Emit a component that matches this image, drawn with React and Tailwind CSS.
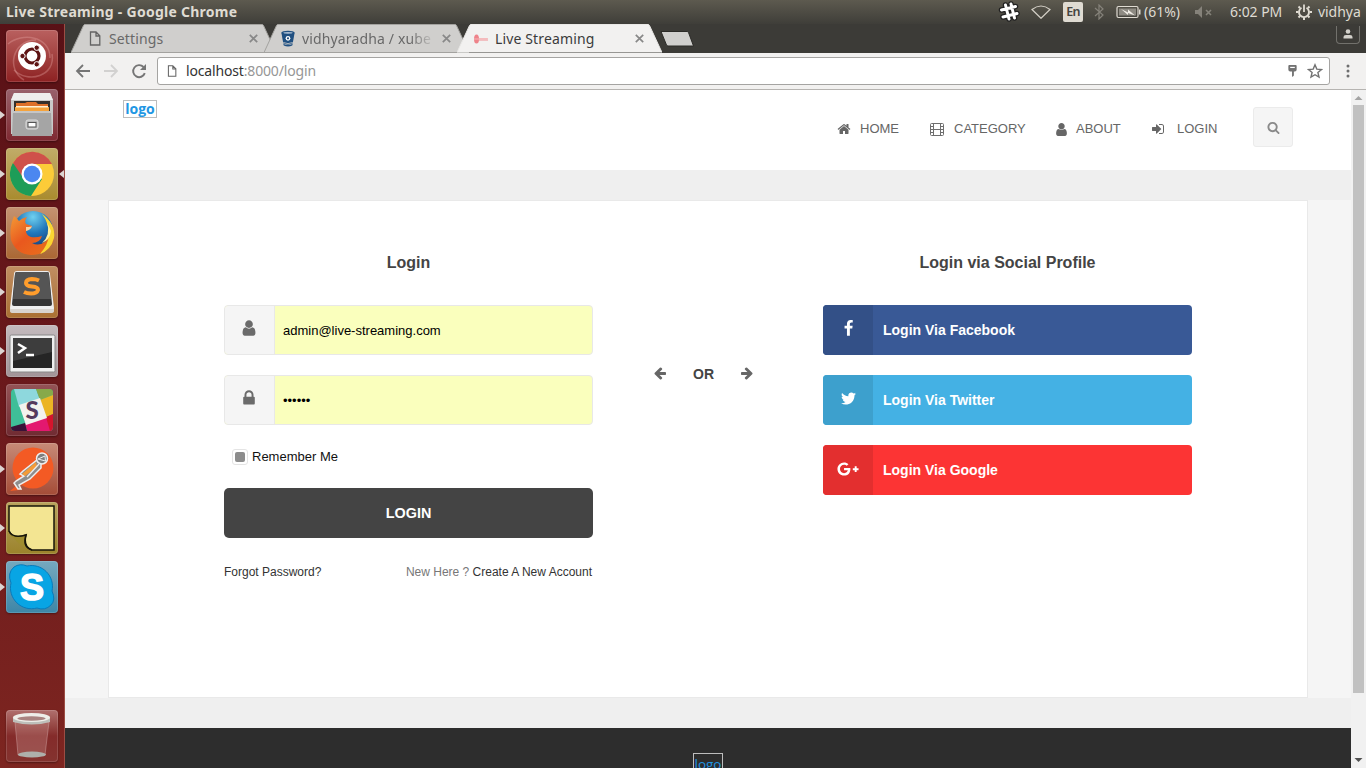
import React from "react";
import { FaGooglePlusG } from "react-icons/fa";

const PATHS = {
  home: "M1472 992v480q0 26-19 45t-45 19h-384v-384h-256v384h-384q-26 0-45-19t-19-45v-480q0-1 .5-3t.5-3l575-474 575 474q1 2 1 6zm223-69l-62 74q-8 9-21 11h-3q-13 0-21-7l-692-577-692 577q-12 8-24 7-13-2-21-11l-62-74q-8-10-7-23.5t11-21.5l719-599q32-26 76-26t76 26l244 204v-195q0-14 9-23t23-9h192q14 0 23 9t9 23v408l219 182q10 8 11 21.5t-7 23.5z",
  user: "M1536 1399q0 109-62.5 187t-150.5 78h-854q-88 0-150.5-78t-62.5-187q0-85 8.5-160.5t31.5-152 58.5-131 94-89 134.5-34.5q131 128 313 128t313-128q76 0 134.5 34.5t94 89 58.5 131 31.5 152 8.5 160.5zm-256-887q0 159-112.5 271.5t-271.5 112.5-271.5-112.5-112.5-271.5 112.5-271.5 271.5-112.5 271.5 112.5 112.5 271.5z",
  lock: "M640 768h512v-192q0-106-75-181t-181-75-181 75-75 181v192zm832 96v576q0 40-28 68t-68 28h-960q-40 0-68-28t-28-68v-576q0-40 28-68t68-28h32v-192q0-184 132-316t316-132 316 132 132 316v192h32q40 0 68 28t28 68z",
  search: "M1216 832q0-185-131.5-316.5t-316.5-131.5-316.5 131.5-131.5 316.5 131.5 316.5 316.5 131.5 316.5-131.5 131.5-316.5zm512 832q0 52-38 90t-90 38q-54 0-90-38l-343-342q-179 124-399 124-143 0-273.5-55.5t-225-150-150-225-55.5-273.5 55.5-273.5 150-225 225-150 273.5-55.5 273.5 55.5 225 150 150 225 55.5 273.5q0 220-124 399l343 343q37 37 37 90z",
  signIn: "M1312 896q0 26-19 45l-544 544q-19 19-45 19t-45-19-19-45v-288h-448q-26 0-45-19t-19-45v-384q0-26 19-45t45-19h448v-288q0-26 19-45t45-19 45 19l544 544q19 19 19 45zm352-352v704q0 119-84.5 203.5t-203.5 84.5h-320q-13 0-22.5-9.5t-9.5-22.5q0-4-1-20t-.5-26.5 3-23.5 10-19.5 20.5-6.5h320q66 0 113-47t47-113v-704q0-66-47-113t-113-47h-312l-11.5-1-11.5-3-8-5.5-7-9-2-13.5q0-4-1-20t-.5-26.5 3-23.5 10-19.5 20.5-6.5h320q119 0 203.5 84.5t84.5 203.5z",
  arrow: "M1664 896v128q0 53-32.5 90.5t-84.5 37.5h-704l293 294q38 36 38 90t-38 90l-75 76q-37 37-90 37-52 0-91-37l-651-652q-37-37-37-90 0-52 37-91l651-650q38-38 91-38 52 0 90 38l75 74q38 38 38 91t-38 91l-293 293h704q52 0 84.5 37.5t32.5 90.5z",
  facebook: "M1343 12v264h-157q-86 0-116 36t-30 108v189h293l-39 296h-254v759h-306v-759h-255v-296h255v-218q0-186 104-288.5t277-102.5q147 0 228 12z",
  twitter: "M1684 408q-67 98-162 167 1 14 1 42 0 130-38 259.5t-115.5 248.5-184.5 210.5-258 146-323 54.5q-271 0-496-145 35 4 78 4 225 0 401-138-105-2-188-64.5t-114-159.5q33 5 61 5 43 0 85-11-112-23-185.5-111.5t-73.5-205.5v-4q68 38 146 41-66-44-105-115t-39-154q0-88 44-163 121 149 294.5 238.5t371.5 99.5q-8-38-8-74 0-134 94.5-228.5t228.5-94.5q140 0 236 102 109-21 205-78-37 115-142 178 93-10 186-50z",
};

function Glyph({ name, className }) {
  return (
    <svg viewBox="0 0 1792 1792" fill="currentColor" className={`shrink-0 ${className}`}>
      <path d={PATHS[name]} />
    </svg>
  );
}

/* ---------- desktop panel ---------- */

function TopPanel() {
  return (
    <div className="flex h-6 items-center bg-linear-to-b from-[#5d5a4f] to-[#3f3e39] font-['Noto_Sans',sans-serif] text-[14px] leading-6 text-[#dfdbd2]">
      <span className="w-[992px] shrink-0 pl-1.5 font-bold tracking-[0.26px] whitespace-nowrap">Live Streaming - Google Chrome</span>
      <svg viewBox="0 0 22 22" className="ml-1.5 h-[22px] w-[22px] shrink-0">
        <g stroke="#222" strokeWidth="5.500" strokeLinecap="round"><path d="M7.500 4l3.500 14M13 3l3.500 14M3.500 9l14-3.500M5 16l14-3.500" /></g>
        <g stroke="#fff" strokeWidth="3" strokeLinecap="round"><path d="M7.500 4l3.500 14M13 3l3.500 14M3.500 9l14-3.500M5 16l14-3.500" /></g>
      </svg>
      <svg viewBox="0 0 20 14" className="ml-[11px] h-3.5 w-5 shrink-0" fill="none" stroke="#d3cfc6" strokeWidth="1.200">
        <path d="M1 4.500Q10 -2.500 19 4.500L10 13.300Z" />
      </svg>
      <span className="ml-3 flex h-5 w-5 shrink-0 items-center justify-center rounded-[2px] bg-[#dfdbd2] text-[12.500px] font-semibold tracking-[-0.7px] text-[#45443f]">En</span>
      <svg viewBox="0 0 10 16" className="ml-[11px] h-4 w-2.5 shrink-0" fill="none" stroke="#85827a" strokeWidth="1.200">
        <path d="M1 4l8 7-4 4V1l4 4-8 7" />
      </svg>
      <svg viewBox="0 0 25 14" className="ml-[12px] h-3.5 w-[25px] shrink-0">
        <rect x="1" y="1.500" width="21" height="11" rx="1.500" fill="none" stroke="#dfdbd2" strokeWidth="1.200" />
        <rect x="3" y="3.500" width="17" height="7" fill="#8e8b83" />
        <path d="M23 4.500h1.500v5H23z" fill="#dfdbd2" />
        <path d="M5 4l7 3.500v-3l7 6-7-2.500v2z" fill="#f0ede6" />
      </svg>
      <span className="ml-[3px] w-[41px] shrink-0 tracking-[0px] whitespace-nowrap">(61%)</span>
      <svg viewBox="0 0 18 12" className="ml-[10px] h-3 w-[18px] shrink-0">
        <path d="M0 4h3l4-4v12L3 8H0z" fill="#85827a" />
        <path d="M11 4l5 5M16 4l-5 5" stroke="#85827a" strokeWidth="1.600" />
      </svg>
      <span className="ml-[17px] w-[55px] shrink-0 tracking-[-0.05px] whitespace-nowrap">6:02 PM</span>
      <svg viewBox="0 0 16 16" className="ml-[11px] h-4 w-4 shrink-0" fill="none" stroke="#dfdbd2">
        <path d="M5.500 3.800A5 5 0 1 0 10.500 3.800" strokeWidth="1.900" />
        <path d="M8 0.500v7.500" strokeWidth="1.800" />
        <path d="M2.500 2.500l1.500 1.500M13.500 2.500L12 4M0 8h2.500M16 8h-2.500M2.500 13.500L4 12M13.500 13.500L12 12M8 16v-2.500" strokeWidth="2" />
      </svg>
      <span className="ml-[6px] tracking-[-0.05px] whitespace-nowrap">vidhya</span>
    </div>
  );
}

/* ---------- launcher ---------- */

const UbuntuArt = () => (
  <>
    <g fill="none" stroke="#e9a8a6" strokeOpacity="0.35" strokeWidth="1.500">
      <path d="M2 14C16 2 44 6 44 28" /><path d="M46 24C50 46 22 54 8 40" /><path d="M18 50C0 40 6 10 30 10" />
    </g>
    <circle cx="26" cy="26" r="14" fill="#fff" />
    <circle cx="26" cy="26" r="7" fill="none" stroke="#5e1414" strokeWidth="3.200" />
    <g fill="#5e1414" stroke="#fff" strokeWidth="1"><circle cx="16.500" cy="26" r="2.700" /><circle cx="30.700" cy="17.700" r="2.700" /><circle cx="30.700" cy="34.300" r="2.700" /></g>
  </>
);
const FilesArt = () => (
  <>
    <path d="M8 4h36l3 7v34H5V11z" fill="#c9c9c9" />
    <path d="M8 4h36l3 7H5z" fill="#eee" />
    <path d="M8 12h36v11H8z" fill="#35302c" />
    <path d="M10 14h9l2-1h9l2 2h10v8H10z" fill="#de7029" />
    <path d="M9 18h34v4H9z" fill="#f5a33c" /><path d="M10 17h32v1.500H10z" fill="#fff1d5" />
    <path d="M7 22h38l1 25H6z" fill="#a5a5a5" /><path d="M7 22h38v2H7z" fill="#c5c5c5" />
    <rect x="20" y="31" width="12" height="9" rx="2" fill="#b9b9b9" stroke="#ddd" />
    <rect x="22" y="33.500" width="8" height="4.500" fill="#fff" stroke="#555" />
  </>
);
const ChromeArt = () => (
  <>
    <circle cx="26" cy="26" r="22" fill="#fccb38" />
    <path d="M26 26L6.900 15A22 22 0 0 0 25 48L36 31z" fill="#1d9d58" />
    <path d="M7 15l11 16 8-15h20A22 22 0 0 0 7 15z" fill="#cf514a" />
    <circle cx="26" cy="26" r="10.500" fill="#fff" /><circle cx="26" cy="26" r="8.300" fill="#4b87f0" />
  </>
);
const FirefoxArt = () => (
  <>
    <defs>
      <radialGradient id="ffGlobe" cx="0.5" cy="0.15" r="0.8"><stop offset="0" stopColor="#6fd0ef" /><stop offset="0.5" stopColor="#2278bb" /><stop offset="1" stopColor="#163c78" /></radialGradient>
      <linearGradient id="ffFox" x1="0" y1="0" x2="1" y2="1"><stop offset="0" stopColor="#f39a35" /><stop offset="0.45" stopColor="#e9581e" /><stop offset="1" stopColor="#e8731c" /></linearGradient>
    </defs>
    <circle cx="27" cy="24" r="20" fill="url(#ffGlobe)" />
    <path d="M8 9Q11 11 13 14Q16 11 21 10Q18 14 20 17L26 19Q25 22 20 24Q20 28 25 30Q30 31 36 29Q34 36 26 36Q33 40 40 34Q45 27 43 15Q50 24 47 35Q40 48 25 48Q10 47 5 33Q3 20 8 9z" fill="url(#ffFox)" />
    <path d="M36 7Q50 17 48 31Q45 43 34 47Q42 38 43 28Q43 16 36 7z" fill="#f9d532" />
    <path d="M41 15Q45 28 36 36Q44 33 45 24z" fill="#fff09a" />
    <path d="M20 20q5 0 6-1-1 4-6 5z" fill="#fbd5a2" />
  </>
);
const SublimeArt = () => (
  <>
    <path d="M8 8Q8 5 11 5H41Q44 5 44 8L48 42Q48 45 45 45H7Q4 45 4 42z" fill="#efefef" />
    <path d="M9 8Q9 6 11 6H41Q43 6 43 8L46 38Q46 40 44 40H8Q6 40 6 38z" fill="#343434" />
    <path d="M9 8Q9 6 11 6H41Q43 6 43 8L45 33H7z" fill="#555" />
    <path d="M33 14.500Q30 13 26 13Q20 13.500 20 17Q20 20 26 20.500Q32 21 32 24Q31 27.500 25 27.500Q21 27.500 18 26" fill="none" stroke="#ff9d2c" strokeWidth="4" />
    <path d="M4 43h44v2q0 2-3 2H7q-3 0-3-2z" fill="#d8d4cf" />
  </>
);
const TerminalArt = () => (
  <>
    <rect x="4" y="10" width="45" height="37" rx="1.500" fill="#eee" stroke="#888" />
    <rect x="7" y="13" width="39" height="30" fill="#252525" /><path d="M7 13h39v14L7 36z" fill="#4e4e4e" fillOpacity="0.6" />
    <path d="M12 19l7 4-7 5" fill="none" stroke="#fff" strokeWidth="2.500" /><path d="M20 30h8" stroke="#fff" strokeWidth="2.500" />
  </>
);
const SlackArt = () => (
  <>
    <clipPath id="slackClip"><rect x="5" y="5" width="42" height="42" rx="4" /></clipPath>
    <g clipPath="url(#slackClip)">
      <path d="M5 5h42v42H5z" fill="#3fbe98" />
      <path d="M8 5h22l4 11-21 7z" fill="#8ed8dd" />
      <path d="M30 5h17v6l-13 5z" fill="#86a94a" />
      <path d="M34 16l13-5v19l-7 3z" fill="#ebb424" />
      <path d="M19 40l21-7 7 14H21z" fill="#e3186f" />
      <path d="M40 33l7-3v17h-3z" fill="#d5142c" />
      <path d="M5 43l14-4 2 8H5z" fill="#3a1137" />
      <path d="M13 21l21-7 7 20-21 7z" fill="#f3f2ee" />
    </g>
    <text x="26" y="35" textAnchor="middle" fontSize="24" fontWeight="900" fontFamily="Lato, sans-serif" fill="#553a5c">S</text>
  </>
);
const PostmanArt = () => (
  <>
    <circle cx="27" cy="25" r="20.500" fill="#f35a24" />
    <path d="M4 48l12-10-3 9z" fill="#f35a24" />
    <path d="M35 20L31 17 17 28 14 31 18 33 10 38 8 40 12 46 15 46 13 42 24 36 35 25z" fill="#8d8d8d" stroke="#eee" strokeWidth="1.500" />
    <path d="M30 19L16 31l3 2 12-9z" fill="#f49b37" />
    <path d="M33 21L21 34" stroke="#eee" strokeWidth="1.300" />
    <circle cx="36" cy="15.500" r="5.500" fill="#7d7d7d" stroke="#eee" strokeWidth="1.500" />
    <path d="M32 16l7-3 .5 5z" stroke="#eee" fill="none" />
  </>
);
const NoteArt = () => (
  <>
    <path d="M3 4H48V48H26Q17 45 20 33Q7 38 3 29z" fill="#f3e592" stroke="#171509" strokeWidth="1.500" />
    <path d="M3 30Q8 37 20 33Q16 44 24 48Q11 43 3 30z" fill="#a08d2f" />
    <path d="M3 29Q7 37 20 33Q16 45 26 48" fill="none" stroke="#171509" strokeWidth="1.500" />
  </>
);
const SkypeArt = () => (
  <>
    <path d="M8 6Q14 2 21 5A21 21 0 0 1 46 30Q50 39 45 44Q39 50 31 47A21 21 0 0 1 5 22Q1 12 8 6z" fill="#08a5e4" stroke="#087bbb" />
    <text x="26" y="39" textAnchor="middle" fontSize="36" fontWeight="700" fontFamily="Liberation Sans, sans-serif" fill="#fff" stroke="#fff" strokeWidth="1.500">S</text>
  </>
);
const TrashArt = () => (
  <>
    <path d="M9 12h34l-4 33H12z" fill="#dfb3b1" fillOpacity="0.25" stroke="#ddb5b3" strokeOpacity="0.4" />
    <ellipse cx="26" cy="44.500" rx="14" ry="3" fill="#aeb0ab" />
    <path d="M7 8v4q19 5 37 0V8z" fill="#bdbfba" />
    <ellipse cx="25.500" cy="7.500" rx="18.500" ry="4.500" fill="#eeeee9" /><ellipse cx="25.500" cy="8.500" rx="14" ry="2.200" fill="#a98380" />
  </>
);

const APPS = [
  { id: "dash", art: UbuntuArt, tile: "bg-linear-to-b from-[#b9605f] to-[#8d2022]" },
  { id: "files", art: FilesArt, tile: "bg-linear-to-b from-[#98616c] to-[#7e2831]", open: true },
  { id: "chrome", art: ChromeArt, tile: "bg-linear-to-b from-[#c1ac68] to-[#a98b2d]", open: true, active: true },
  { id: "firefox", art: FirefoxArt, tile: "bg-linear-to-b from-[#c49372] to-[#aa6733]", open: true },
  { id: "sublime", art: SublimeArt, tile: "bg-linear-to-b from-[#c08e62] to-[#aa7032]", open: true },
  { id: "terminal", art: TerminalArt, tile: "bg-linear-to-b from-[#c4bbbe] to-[#a29498]", open: true },
  { id: "slack", art: SlackArt, tile: "bg-linear-to-b from-[#945356] to-[#702b32]" },
  { id: "postman", art: PostmanArt, tile: "bg-linear-to-b from-[#c78a77] to-[#a44c37]", open: true },
  { id: "notes", art: NoteArt, tile: "bg-linear-to-b from-[#b9a35d] to-[#9b832b]", open: true },
  { id: "skype", art: SkypeArt, tile: "bg-linear-to-b from-[#76a9bf] to-[#3d86a7]", open: true },
];

function Tile({ app }) {
  const Art = app.art;
  return (
    <div className="flex h-[52px] w-full items-center">
      <span className="flex w-1.5 shrink-0">
        {app.open && <svg viewBox="0 0 5 8" className="h-2 w-[5px]"><path d="M0 0l5 4-5 4z" fill="#dcd5d2" /></svg>}
      </span>
      <span className={`h-[52px] w-[52px] shrink-0 rounded-[4px] shadow-[inset_0_0_0_1px_rgba(255,255,255,0.14),0_1px_2px_rgba(0,0,0,0.35)] ${app.tile}`}>
        <svg viewBox="0 0 52 52" className="h-[52px] w-[52px]"><Art /></svg>
      </span>
      {app.active && <svg viewBox="0 0 5 8" className="ml-[1px] h-2 w-[5px] shrink-0"><path d="M5 0L0 4l5 4z" fill="#dcd5d2" /></svg>}
    </div>
  );
}

function Launcher() {
  return (
    <div className="flex w-[65px] shrink-0 flex-col justify-between border-r border-[#9c4d44] bg-linear-to-b from-[#591116] via-[#6b191c] to-[#7d2520] pt-1.5 pb-1.5">
      <div className="flex flex-col gap-[7px]">
        {APPS.map((app) => <Tile key={app.id} app={app} />)}
      </div>
      <Tile app={{ id: "trash", art: TrashArt, tile: "bg-linear-to-b from-[#b0706e] via-[#842b2a] to-[#84332f]" }} />
    </div>
  );
}

/* ---------- browser chrome ---------- */

function PageIcon({ className }) {
  return (
    <svg viewBox="0 0 12 15" className={`shrink-0 ${className}`} fill="none" stroke="#646464" strokeWidth="1.300">
      <path d="M1.500 1h5.500l3.800 3.800V14H1.500zM7 1v4h4" />
    </svg>
  );
}

function Bucket() {
  return (
    <svg viewBox="0 0 16 18" className="h-[17px] w-4 shrink-0">
      <path d="M1 3l2 11q5 3 10 0l2-11z" fill="#205081" /><ellipse cx="8" cy="3" rx="7" ry="2.300" fill="#205081" />
      <ellipse cx="8" cy="3" rx="5" ry="0.900" fill="#a9bdd2" /><circle cx="8" cy="8.800" r="2.500" fill="#fff" /><circle cx="8" cy="8.800" r="1.200" fill="#205081" />
      <path d="M3 13.200q5 2.500 10 0" fill="none" stroke="#d0cfcd" strokeWidth="0.800" />
      <path d="M3 14.500q5 2.500 10 0l-.5 2q-4.500 2-9 0z" fill="#205081" />
    </svg>
  );
}

function Favicon() {
  return (
    <svg viewBox="0 0 16 12" className="h-3 w-4 shrink-0">
      <ellipse cx="3.500" cy="6" rx="2.500" ry="4.500" fill="#ed7078" fillOpacity="0.85" />
      <path d="M6 5h9v3H6z" fill="#ef8f93" fillOpacity="0.5" />
      <path d="M1 6h13" stroke="#f7b6b9" strokeWidth="1" />
    </svg>
  );
}

function Tab({ icon, title, active, className, faded }) {
  return (
    <div className={`relative flex h-[29px] w-[205px] shrink-0 items-center pr-[17px] pl-[16px] ${active ? "z-10" : ""} ${className}`}>
      <svg viewBox="0 0 205 29" className="absolute inset-0 h-[29px] w-[205px]">
        <path d="M0 28.500L12.500 1.500Q13 .5 14 .5H191Q192 .5 192.500 1.500L205 28.500z" fill={active ? "#f2f1f0" : "#d0cfcd"} />
        <path d="M0 28.500L12.500 1.500Q13 .5 14 .5H191Q192 .5 192.500 1.500L205 28.500" fill="none" stroke={active ? "#e9e8e6" : "#a3a29f"} strokeWidth="1" />
        {!active && <path d="M0 28.500h205" stroke="#a3a29f" />}
      </svg>
      <span className="relative flex w-4 shrink-0 justify-center">{icon}</span>
      <span className={`relative ml-[6px] w-[134px] overflow-hidden text-[14px] tracking-[0.14px] whitespace-nowrap ${active ? "text-[#3b3b3b]" : "text-[#686868]"} ${faded ? "mask-r-from-80% mask-r-to-100%" : ""}`}>{title}</span>
      <svg viewBox="0 0 9 9" className="relative ml-1.5 h-[9px] w-[9px] shrink-0"><path d="M.8.8l7.400 7.400M8.200.8L.8 8.200" stroke="#888" strokeWidth="1.700" /></svg>
    </div>
  );
}

function TabStrip() {
  return (
    <div className="flex h-[29px] bg-[#3c3b37] font-['Noto_Sans',sans-serif]">
      <Tab className="ml-[6px]" icon={<PageIcon className="h-[15px] w-3" />} title="Settings" />
      <Tab className="-ml-3" icon={<Bucket />} title="vidhyaradha / xube" faded />
      <Tab className="-ml-3" icon={<Favicon />} title="Live Streaming" active />
      <svg viewBox="0 0 34 16" className="mt-[7px] -ml-[2px] h-4 w-[34px] shrink-0">
        <path d="M1 .5h26q1 0 1.500 1l5 13.500H8q-1 0-1.500-1z" fill="#d0cfcd" stroke="#2b2a27" />
      </svg>
      <div className="mt-[2px] mr-[6px] ml-auto flex h-[18px] w-6 items-center justify-center rounded-b-[4px] border border-t-0 border-[#72716c]">
        <svg viewBox="0 0 10 10" className="-mt-0.5 h-2.5 w-2.5"><circle cx="5" cy="2.500" r="2.300" fill="#d2d0ca" /><path d="M.5 9.500V8Q.5 6 3 6h4q2.500 0 2.500 2v1.500z" fill="#d2d0ca" /></svg>
      </div>
    </div>
  );
}

function Toolbar() {
  return (
    <div className="flex h-[37px] items-center border-b border-[#b6b4b1] bg-[#f2f1f0] font-['Noto_Sans',sans-serif]">
      <svg viewBox="0 0 16 14" className="ml-[10px] h-3.5 w-4 shrink-0" fill="none" stroke="#757575" strokeWidth="1.800"><path d="M15 7H2M8 1L2 7l6 6" /></svg>
      <svg viewBox="0 0 16 14" className="ml-[13px] h-3.5 w-4 shrink-0" fill="none" stroke="#d2d1d0" strokeWidth="1.800"><path d="M0 7h13M7 1l6 6-6 6" /></svg>
      <svg viewBox="0 0 16 16" className="ml-[11px] h-4 w-4 shrink-0"><path d="M13.800 10.200A6 6 0 1 1 12.500 4" fill="none" stroke="#757575" strokeWidth="1.900" /><path d="M15 1v6H9z" fill="#757575" /></svg>
      <div className="ml-[10px] flex h-7 w-[1173px] shrink-0 items-center rounded-[3px] border border-[#a5a4a2] bg-white pr-[7px] pl-[9px]">
        <PageIcon className="-mt-px h-3 w-[10px]" />
        <span className="-mt-0.5 ml-[9px] text-[14px] tracking-[-0.16px] text-[#333]">localhost<span className="text-[#969696]">:8000/login</span></span>
        <svg viewBox="0 0 9 13" className="ml-auto h-3 w-[9px]"><path d="M0 1q0-1 1-1h7q1 0 1 1v4q0 2-2 2H6v4.500L4.500 13 4 12V7H2Q0 7 0 5z" fill="#727272" /><path d="M2 2h5v1.300H2z" fill="#fff" /></svg>
        <svg viewBox="0 0 16 16" className="-mr-px ml-[10px] h-4 w-4"><path d="M8 1.800l1.800 4.300 4.700.4-3.600 3 1.100 4.600L8 11.700 4 14.100l1.100-4.600-3.600-3 4.700-.4z" fill="none" stroke="#727272" strokeWidth="1.400" /></svg>
      </div>
      <svg viewBox="0 0 4 14" className="ml-4 h-3.5 w-1 shrink-0" fill="#6e6e6e"><circle cx="2" cy="2" r="1.500" /><circle cx="2" cy="7" r="1.500" /><circle cx="2" cy="12" r="1.500" /></svg>
    </div>
  );
}

/* ---------- site ---------- */

function FilmIcon() {
  return (
    <svg viewBox="0 0 14 13" className="mt-[2px] h-[13px] w-3.5 shrink-0" fill="none" stroke="#6e6e6e">
      <rect x=".5" y=".5" width="13" height="12" rx="1" /><path d="M3.500.5v12M10.500.5v12M3.500 6.500h7M.5 3.500h3M.5 6.500h3M.5 9.500h3M10.500 3.500h3M10.500 6.500h3M10.500 9.500h3" />
    </svg>
  );
}

function SiteHeader() {
  return (
    <header className="flex h-20 shrink-0 bg-white text-[13px] text-[#666]">
      <a className="mt-[10px] ml-[58px] flex h-[18px] w-[34px] items-center justify-center overflow-hidden border border-[#bdbdbd] font-['Open_Sans',sans-serif] text-[14px] leading-4 font-bold text-[#2196e3]">logo</a>
      <nav className="ml-auto flex h-[77px] items-center whitespace-nowrap">
        <span className="flex w-[92px] items-center"><Glyph name="home" className="mt-px mr-[9px] -ml-px h-3.5 w-3.5" />HOME</span>
        <span className="flex w-[125px] items-center"><FilmIcon /><span className="ml-[10px]">CATEGORY</span></span>
        <span className="flex w-[96px] items-center"><Glyph name="user" className="mt-px mr-[7px] -ml-px h-[15px] w-[15px]" />ABOUT</span>
        <span className="flex w-[102px] items-center"><Glyph name="signIn" className="mt-px mr-[12px] h-3.5 w-3.5" />LOGIN</span>
      </nav>
      <button className="mt-[17px] mr-[58px] flex h-10 w-10 items-center justify-center rounded-[3px] border border-[#ebebeb] bg-[#f5f5f5] text-[#8a8a8a]">
        <Glyph name="search" className="h-[13px] w-[13px]" />
      </button>
    </header>
  );
}

function Field({ icon, value }) {
  return (
    <div className="flex h-[50px] rounded-[4px] border border-[#e8e8e8] bg-[#faffbd]">
      <span className="flex w-[50px] justify-center rounded-l-[3px] border-r border-[#e8e8e8] bg-[#f5f5f5] pt-[13px] pr-px text-[#6b6b6b]">
        <Glyph name={icon} className="h-[18px] w-[18px]" />
      </span>
      <span className="flex items-center pt-0.5 pl-2 text-[13px] text-black">{value}</span>
    </div>
  );
}

function Social({ icon, label, tone, dark }) {
  return (
    <div className={`flex h-[50px] overflow-hidden rounded-[4px] text-white ${tone}`}>
      <span className={`flex w-[50px] justify-center pt-[15px] ${dark}`}>{icon}</span>
      <span className="flex items-center pt-px pl-[10px] text-[14px] font-bold">{label}</span>
    </div>
  );
}

function LoginCard() {
  return (
    <div className="mx-[43px] flex h-[498px] border border-[#e9e9e9] bg-white">
      <div className="ml-[115px] w-[369px] shrink-0">
        <h2 className="mt-[52px] text-center text-[16px] leading-5 font-bold text-[#444]">Login</h2>
        <div className="mt-[32px] flex flex-col gap-5">
          <Field icon="user" value="admin@live-streaming.com" />
          <Field icon="lock" value="••••••" />
        </div>
        <div className="mt-6 ml-2 flex h-4 items-center text-[13px] text-[#111]">
          <span className="mr-1 flex h-4 w-4 items-center justify-center rounded-[3px] border border-[#e4e4e4]"><span className="h-[10px] w-[10px] rounded-[2px] bg-[#8c8c8c]" /></span>
          Remember Me
        </div>
        <button className="mt-[23px] block h-[50px] w-full rounded-[5px] bg-[#444] pt-0.5 text-[14.4px] font-bold text-white">LOGIN</button>
        <div className="mt-[26px] flex justify-between text-[12px] leading-4 text-[#333]">
          <span>Forgot Password?</span>
          <span className="mr-[1px]"><span className="text-[#777]">New Here ?</span> Create A New Account</span>
        </div>
      </div>
      <div className="mt-[162px] ml-[60px] flex h-5 w-[101px] shrink-0 items-center justify-between text-[#666]">
        <Glyph name="arrow" className="h-3.5 w-3.5" />
        <span className="pt-0.5 text-[14px] font-bold text-[#444]">OR</span>
        <Glyph name="arrow" className="h-3.5 w-3.5 -scale-x-100" />
      </div>
      <div className="ml-[69px] w-[369px] shrink-0">
        <h2 className="mt-[52px] text-center text-[16px] leading-5 font-bold text-[#444]">Login via Social Profile</h2>
        <div className="mt-[32px] flex flex-col gap-5">
          <Social icon={<Glyph name="facebook" className="h-[17px] w-[17px]" />} label="Login Via Facebook" tone="bg-[#395996]" dark="bg-[#335087]" />
          <Social icon={<Glyph name="twitter" className="h-[17px] w-[17px]" />} label="Login Via Twitter" tone="bg-[#44b1e4]" dark="bg-[#3da0cd]" />
          <Social icon={<FaGooglePlusG className="-mt-[2px] h-[22px] w-[22px]" />} label="Login Via Google" tone="bg-[#fc3434]" dark="bg-[#e32f2f]" />
        </div>
      </div>
    </div>
  );
}

function Scrollbar() {
  return (
    <div className="flex w-[15px] shrink-0 flex-col items-center bg-[#f1f1f1]">
      <svg viewBox="0 0 15 15" className="h-[15px] w-[15px] shrink-0"><path d="M7.500 6l4 4h-8z" fill="#a3a3a3" /></svg>
      <div className="h-[588px] w-[11px] bg-[#c1c1c1]" />
      <svg viewBox="0 0 15 15" className="mt-auto h-[15px] w-[15px] shrink-0"><path d="M7.500 9l4-4h-8z" fill="#505050" /></svg>
    </div>
  );
}

export default function App() {
  return (
    <div className="flex h-[768px] w-[1366px] flex-col overflow-hidden bg-white">
      <TopPanel />
      <div className="flex min-h-0 flex-1">
        <Launcher />
        <div className="flex min-w-0 flex-1 flex-col">
          <TabStrip />
          <Toolbar />
          <div className="flex min-h-0 flex-1">
            <div className="flex min-w-0 flex-1 flex-col font-['Liberation_Sans',sans-serif]">
              <SiteHeader />
              <div className="h-[30px] shrink-0 bg-[#efefef]" />
              <main className="shrink-0 bg-[#f5f5f5]"><LoginCard /></main>
              <div className="h-[30px] shrink-0 bg-[#efefef]" />
              <footer className="flex min-h-0 flex-1 justify-center overflow-hidden bg-[#2d2d2d] pt-[25px]">
                <span className="h-5 w-[30px] shrink-0 border border-[#bdbdbd] text-center font-['Open_Sans',sans-serif] text-[13.500px] leading-5 text-[#2196e3]">logo</span>
              </footer>
            </div>
            <Scrollbar />
          </div>
        </div>
      </div>
    </div>
  );
}
